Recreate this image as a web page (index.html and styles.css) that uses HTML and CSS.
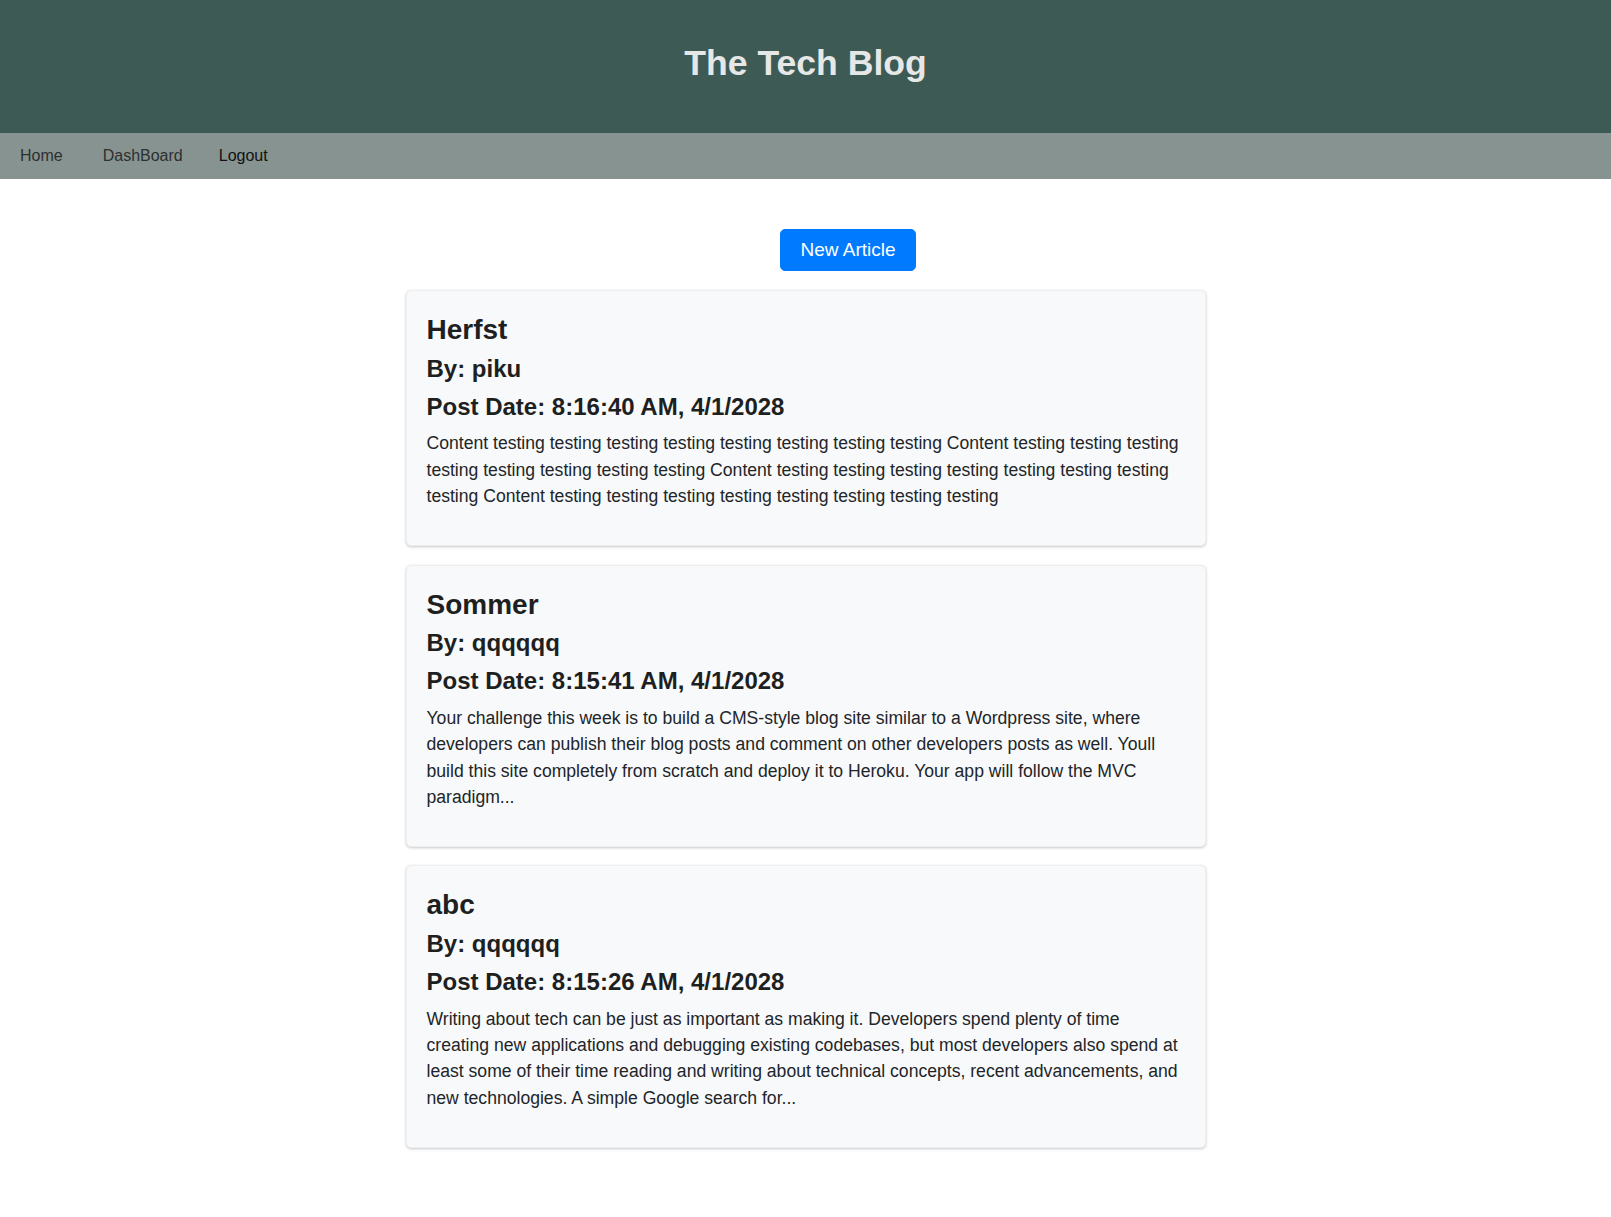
FILE: index.html
```html
<!DOCTYPE html>
<html lang="en">
<head>
<meta charset="utf-8">
<title>The Tech Blog</title>
<link rel="stylesheet" href="styles.css">
</head>
<body>
<header class="site-header">
  <h1 class="site-title">The Tech Blog</h1>
</header>
<nav class="site-nav">
  <a class="nav-link nav-home" href="#">Home</a>
  <a class="nav-link nav-dash" href="#">DashBoard</a>
  <a class="nav-link nav-logout" href="#">Logout</a>
</nav>
<main class="content">
  <div class="actions">
    <button class="btn-new" type="button">New Article</button>
  </div>
  <article class="post-card">
    <h3 class="post-title">Herfst</h3>
    <h4 class="post-meta">By: piku</h4>
    <h4 class="post-meta">Post Date: 8:16:40 AM, 4/1/2028</h4>
    <p class="post-body">Content testing testing testing testing testing testing testing testing Content testing testing testing testing testing testing testing testing Content testing testing testing testing testing testing testing testing Content testing testing testing testing testing testing testing testing</p>
  </article>
  <article class="post-card">
    <h3 class="post-title">Sommer</h3>
    <h4 class="post-meta">By: qqqqqq</h4>
    <h4 class="post-meta">Post Date: 8:15:41 AM, 4/1/2028</h4>
    <p class="post-body">Your challenge this week is to build a CMS-style blog site similar to a Wordpress site, where developers can publish their blog posts and comment on other developers posts as well. Youll build this site completely from scratch and deploy it to Heroku. Your app will follow the MVC paradigm...</p>
  </article>
  <article class="post-card">
    <h3 class="post-title">abc</h3>
    <h4 class="post-meta">By: qqqqqq</h4>
    <h4 class="post-meta">Post Date: 8:15:26 AM, 4/1/2028</h4>
    <p class="post-body">Writing about tech can be just as important as making it. Developers spend plenty of time creating new applications and debugging existing codebases, but most developers also spend at least some of their time reading and writing about technical concepts, recent advancements, and new technologies. A simple Google search for...</p>
  </article>
</main>
</body>
</html>
```

FILE: styles.css
```css
* {
  box-sizing: border-box;
}

body {
  margin: 0;
  font-family: "Liberation Sans", Arial, sans-serif;
  color: #212529;
  background: #ffffff;
}

.site-header {
  background: #3e5a54;
  padding: 42px 0 48px;
  text-align: center;
}

.site-title {
  margin: 0;
  font-size: 35.6px;
  line-height: 1.2;
  font-weight: 700;
  color: #e6e7e7;
}

.site-nav {
  background: #879390;
  height: 46px;
  display: flex;
  align-items: center;
  padding-left: 20px;
}

.nav-link {
  font-size: 16px;
  line-height: 24px;
  text-decoration: none;
  color: #2c302f;
}

.nav-dash {
  margin-left: 40px;
}

.nav-logout {
  margin-left: 36px;
  color: #111111;
}

.content {
  width: 800px;
  margin: 0 auto;
  padding-top: 50px;
  padding-bottom: 40px;
}

.actions {
  display: flex;
  justify-content: center;
  margin-bottom: 19px;
}

.btn-new {
  margin-left: 85px;
  background: #007bff;
  color: #ffffff;
  border: 1px solid #007bff;
  border-radius: 5px;
  font-family: "Liberation Sans", Arial, sans-serif;
  font-size: 19px;
  line-height: 1.5;
  padding: 6px 19px;
  cursor: pointer;
}

.post-card {
  background: #f8f9fa;
  border: 1px solid #eceef0;
  border-radius: 5px;
  box-shadow: 0 1px 3px rgba(0, 0, 0, 0.22);
  padding: 22px 20px 20px;
  margin-bottom: 18.5px;
}

.post-title {
  margin: 0 0 8px;
  font-size: 28px;
  line-height: 1.2;
  font-weight: 700;
  color: #1e1f21;
}

.post-meta {
  margin: 0 0 9px;
  font-size: 24px;
  line-height: 1.2;
  font-weight: 700;
  color: #1e1f21;
}

.post-body {
  margin: 0 0 15.5px;
  font-size: 17.6px;
  line-height: 1.5;
  color: #212529;
}
```
